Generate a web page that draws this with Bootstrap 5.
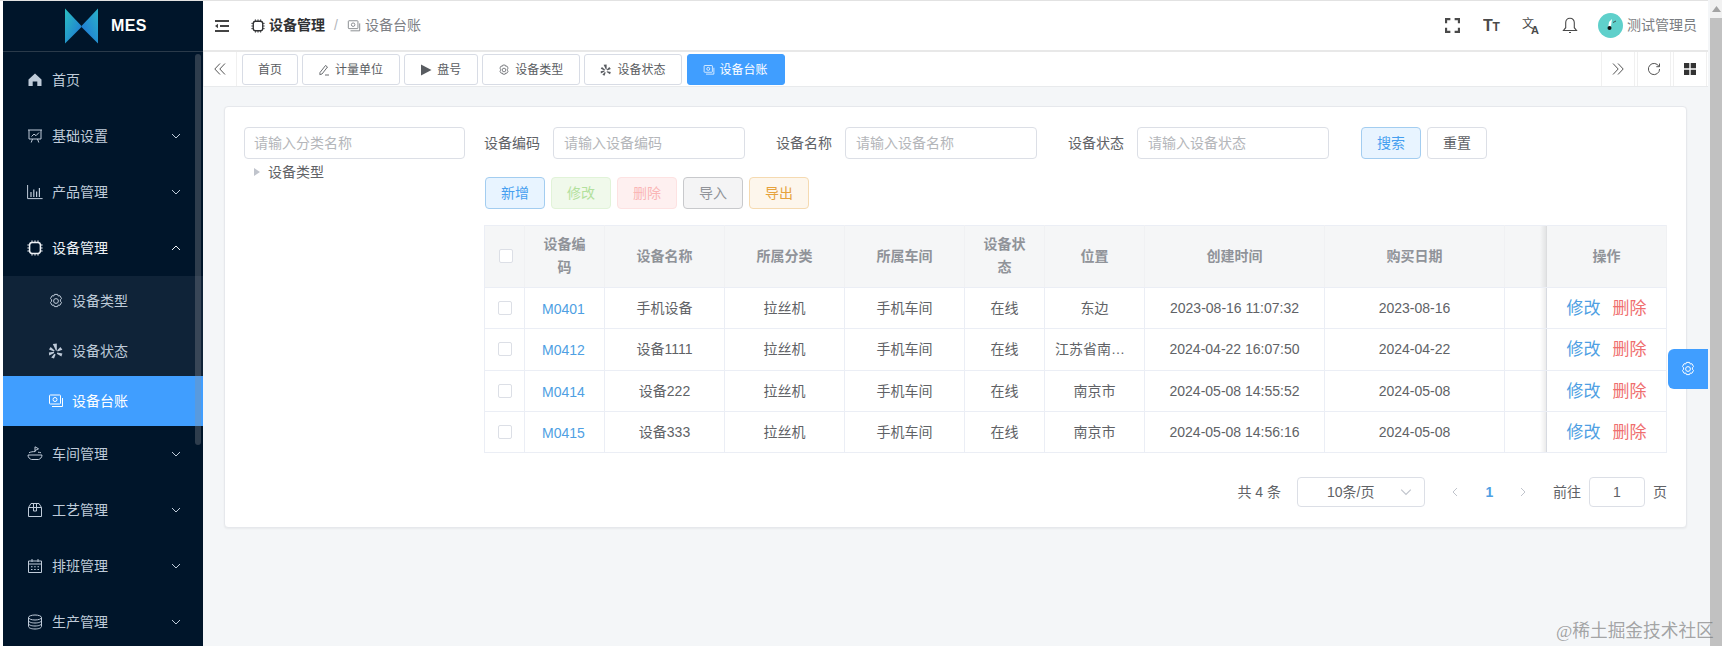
<!DOCTYPE html>
<html lang="zh-CN">
<head>
<meta charset="utf-8">
<title>设备台账</title>
<link href="https://cdn.jsdelivr.net/npm/bootstrap@5.3.0/dist/css/bootstrap.min.css" rel="stylesheet">
<style>
html,body{height:646px;overflow:hidden;margin:0}
body{font-family:"Liberation Sans","Noto Sans CJK SC",sans-serif;font-size:14px;color:#606266;background:#f4f6f8}
.app-shell{height:646px;border-top:1px solid #e2e2e2;padding-left:3px;background:#fff;position:relative}
.side-rail{width:200px;flex:none;background:#00152a;color:#bfcbd9;position:relative;overflow:hidden}
.logo-bar{height:51px;flex:none;border-bottom:1px solid #2a3a4a;padding-left:62px;gap:13px}
.logo-name{color:#fff;font-weight:700;font-size:16px;letter-spacing:.4px}
.side-item{height:56px;flex:none;padding:0 22px 0 24px;gap:9px}
.side-item .side-ico{width:16px;height:16px;flex:none}
.side-item .side-label{flex:1}
.side-chev{width:10px;height:10px;flex:none}
.side-sub{background:#0f2338;flex:none}
.sub-item{height:50px;padding-left:45px;gap:8px}
.sub-item svg{width:16px;height:16px;flex:none}
.sub-item.is-current{background:#409eff;color:#fff}
.item-open{color:#eef2f6}
.side-thumb{position:absolute;left:192px;top:53px;width:6px;height:391px;border-radius:3px;background:rgba(144,147,153,.32)}
.main-col{width:1505px;flex:none;min-width:0}
.top-bar{height:51px;flex:none;border-bottom:2px solid #e8e8e8;background:#fff;padding:0 11px 0 12px}
.burger{width:14px;height:12px;flex:none;color:#444}
.crumbs{margin:0 0 0 22px;font-size:14px;--bs-breadcrumb-divider-color:#b4b7bc;--bs-breadcrumb-item-padding-x:9px;--bs-breadcrumb-margin-bottom:0}
.crumbs .breadcrumb-item{display:flex;align-items:center;gap:4px;color:#7d8085}
.crumbs .breadcrumb-item::before{color:#b4b7bc;margin-right:-4px}
.crumbs .crumb-root{color:#303133;font-weight:700}
.crumbs svg{width:14px;height:14px}
.tool-box{width:39px;display:flex;justify-content:center;color:#4a4a4a}
.avatar-dot{width:25px;height:25px;flex:none;margin:0 4px 0 9px}
.user-name{color:#7a7d82}
.tag-bar{height:35px;flex:none;background:#fff;border-bottom:1px solid #e8eaec}
.tag-nav{width:34px;height:34px;flex:none;color:#555;border-right:1px solid #f0f0f0;border-left:1px solid #f0f0f0}
.tag-nav svg{width:14px;height:14px}
.tag-list{gap:4.1px;margin-left:5px;flex:1;padding-top:2px}
.view-tag{height:31px;padding:0 15px;border:1px solid #d8dce5;border-radius:3px;font-size:12px;color:#595c61;background:#fff;gap:5px}
.view-tag.tag-ico{padding-right:16px}
.view-tag svg{width:12px;height:12px;flex:none}
.view-tag.is-current{background:#409eff;border-color:#409eff;color:#fff}
.tag-tools{gap:2px;margin-right:1px}
.work-area{flex:1;padding:19px 21px 20px;background:#f4f6f8;min-height:0}
.sheet{height:422px;background:#fff;border:1px solid #e6e8ec;border-radius:4px;padding:20px 19px 19px;box-shadow:0 1px 2px rgba(0,0,0,.05);gap:20px}
.tree-col{width:221px;flex:none}
.soft-input.form-control{height:32px;padding:0 10px;font-size:14px;border:1px solid #dcdfe6;border-radius:4px;color:#606266;box-shadow:none}
.soft-input.form-control::placeholder{color:#b4b6ba;opacity:1}
.tree-col .soft-input.form-control{padding-left:9px}
.tree-node{height:26px;padding-left:10px;gap:8px;color:#606266}
.tree-arrow{width:0;height:0;border-left:6px solid #c0c4cc;border-top:4px solid transparent;border-bottom:4px solid transparent}
.data-col{width:1182px;flex:none}
.filter-row{height:32px;margin-bottom:18px}
.filter-label{width:55px;margin:0 14px 0 -1px;flex:none;white-space:nowrap}
.filter-input{width:192px;flex:none;margin-right:32px}
.tone-btn.btn{width:60px;height:32px;padding:0;font-size:14px;border-radius:4px;--bs-btn-disabled-opacity:1;opacity:1}
.tone-blue.btn{background:#e8f4ff;border-color:#a3cdf0;color:#469ff0}
.tone-green.btn{background:#f0f9eb;border-color:#e1f3d8;color:#b3e19d}
.tone-red.btn{background:#fef0f0;border-color:#fde2e2;color:#fab6b6}
.tone-gray.btn{background:#f4f4f5;border-color:#c8c9cc;color:#909399}
.tone-amber.btn{background:#fdf6ec;border-color:#f5dab1;color:#e6a23c}
.tone-plain.btn{background:#fff;border-color:#dcdfe6;color:#606266;margin-left:6px}
.action-row{gap:6px;height:32px;margin-bottom:16px}
.grid-table.table{width:1182px;table-layout:fixed;margin:0 0 0 -1px;font-size:14px;--bs-table-color:#606266;border-top:1px solid #ebeef5;border-color:#ebeef5}
.grid-table th,.grid-table td{padding:0 10px;text-align:center;vertical-align:middle;border:0;border-right:1px solid #ebeef5;border-bottom:1px solid #ebeef5}
.grid-table th{height:62px;background:#f5f6f7;color:#909399;font-weight:700;line-height:23px;padding:0 14px 1px;border-right-color:#f0f1f3}
.grid-table td{height:41.25px;line-height:20px}
.grid-table tr>*:first-child{border-left:1px solid #ebeef5}
.tick-box{display:block;width:14px;height:14px;margin:0 auto;border:1px solid #dcdfe6;border-radius:2px;background:#fff}
.code-link{color:#4f9fe3;text-decoration:none;display:inline-block;padding-top:2px;margin-left:-2px}
.grid-table .fix-col{position:relative}
.grid-table .fix-col::before{content:"";position:absolute;left:-7px;top:0;bottom:0;width:7px;background:linear-gradient(to left,rgba(0,0,0,.09),rgba(0,0,0,0))}
.act-edit,.act-del{font-size:17px;text-decoration:none;display:inline-block;padding-top:2px}
.act-edit{color:#4f9fe3}
.act-del{color:#ef6f6f;margin-left:12px}
.pager-row{margin-top:24px;height:30px}
.pager-total{margin-right:16px}
.pager-size{width:128px;height:30px;border:1px solid #dcdfe6;border-radius:4px;padding:0 12px 0 29px;margin-right:13px}
.pager-size svg{width:12px;height:12px;color:#c0c4cc}
.pager-btn{width:33px;text-align:center;color:#c0c4cc;height:30px}
.pager-btn svg{width:10px;height:10px}
.pager-num{color:#4f9fe3;font-weight:700;width:37px}
.pager-next{width:29px}
.pager-jump{margin-left:16px;gap:8px}
.pager-input{width:56px;height:30px;border:1px solid #dcdfe6;border-radius:4px;color:#606266}
.page-scroll{width:14px;flex:none;padding-left:2px;background:#f4f6f8;margin-top:-1px}
.scroll-up{height:18px;background:#f1f1f1;color:#a3a3a3;font-size:0}
.scroll-up svg{width:9px;height:6px}
.scroll-thumb{flex:1;background:#c1c1c1}
.float-gear{position:absolute;left:1668px;top:348px;width:40px;height:40px;background:#409eff;color:#fff;border-radius:6px 0 0 6px}
.float-gear svg{width:16px;height:16px}
.mark-text{position:absolute;left:1556px;top:618px;font:17.7px/24px "Liberation Serif","Noto Sans CJK SC",serif;color:rgba(110,110,110,.62);white-space:nowrap}
</style>
</head>
<body>
<svg width="0" height="0" class="position-absolute">
  <defs>
    <linearGradient id="wingL" x1="0" y1="0" x2="1" y2="1"><stop offset="0" stop-color="#2bbfc0"/><stop offset="1" stop-color="#1d72d6"/></linearGradient>
    <linearGradient id="wingR" x1="1" y1="0" x2="0" y2="1"><stop offset="0" stop-color="#2bb3c8"/><stop offset="1" stop-color="#1d6fd8"/></linearGradient>
    <symbol id="i-chev" viewBox="0 0 10 10"><path d="M1 3l4 4 4-4" fill="none" stroke="currentColor" stroke-width="1"/></symbol>
    <symbol id="i-chip" viewBox="0 0 16 16"><g fill="none" stroke="currentColor"><rect x="2.6" y="2.6" width="10.8" height="10.8" rx="2.6" stroke-width="1.5"/><path d="M5 .4v2.400M8 .4v2.400M11 .4v2.400M5 13.200v2.400M8 13.200v2.400M11 13.200v2.400M.4 5h2.400M.4 8h2.400M.4 11h2.400M13.200 5h2.400M13.200 8h2.400M13.200 11h2.400" stroke-width="1"/></g></symbol>
    <symbol id="i-gear" viewBox="0 0 16 16"><g fill="none" stroke="currentColor" stroke-width="1"><path d="M6.400 1.400h3.200l.6 1.600 1.700-.3 1.600 2.800-1.100 1.300v1.400l1.100 1.300-1.600 2.800-1.700-.3-.6 1.600H6.400l-.6-1.600-1.700.3-1.600-2.800 1.100-1.300V6.800L2.500 5.500l1.600-2.800 1.700.3z" stroke-linejoin="round"/><circle cx="8" cy="8" r="2.4"/></g></symbol>
    <symbol id="i-yelp" viewBox="0 0 16 16"><g fill="currentColor"><path d="M4.800 1l4-.4v6.800L8 7.800z"/><path d="M1 6.400L2.600 4l4 3.400-.6 1.200z"/><path d="M1.200 12.600L.9 9.600l5-.9.3 1.300z"/><path d="M6 15.600l-2.800-1.200 3.200-3.600 1.200.6z"/><path d="M9.200 7.200l3.200-3.200 2 2.800-4.800 1.800z"/><path d="M9.400 9.600l5 .9-1 3-4.600-2.800z"/></g></symbol>
    <symbol id="i-cash" viewBox="0 0 16 16"><g fill="none" stroke="currentColor" stroke-width="1"><rect x="1.500" y="2" width="11" height="9" rx=".8"/><circle cx="7" cy="6.500" r="2"/><path d="M14.500 5v8.500H4"/></g></symbol>
    <symbol id="i-dleft" viewBox="0 0 14 14"><path d="M7 1.500L1.800 7 7 12.500M12 1.500L6.800 7l5.200 5.500" fill="none" stroke="currentColor" stroke-width="1"/></symbol>
    <symbol id="i-dright" viewBox="0 0 14 14"><path d="M2 1.500L7.200 7 2 12.500M7 1.500L12.200 7 7 12.500" fill="none" stroke="currentColor" stroke-width="1"/></symbol>
  </defs>
</svg>

<div class="app-shell d-flex">
  <aside class="side-rail d-flex flex-column">
    <div class="logo-bar d-flex align-items-center">
      <svg width="33" height="36" viewBox="0 0 34 36"><polygon points="0,0 17,18 17,19 0,36" fill="url(#wingL)"/><polygon points="34,0 17,18 17,19 34,36" fill="url(#wingR)"/></svg>
      <span class="logo-name">MES</span>
    </div>
    <div class="side-item d-flex align-items-center">
      <svg class="side-ico" viewBox="0 0 16 16"><path d="M8 1.500L1.500 7.600V14h4.200V9.600h4.600V14h4.200V7.600z" fill="currentColor"/></svg>
      <span class="side-label">首页</span>
    </div>
    <div class="side-item d-flex align-items-center">
      <svg class="side-ico" viewBox="0 0 16 16"><path d="M1 2h14M2 2v9h12V2M5.500 11l-1.300 3.500M10.500 11l1.300 3.500M4.500 8.500l2.500-2.400 2 1.600 3-3.200" fill="none" stroke="currentColor"/></svg>
      <span class="side-label">基础设置</span>
      <svg class="side-chev"><use href="#i-chev"/></svg>
    </div>
    <div class="side-item d-flex align-items-center">
      <svg class="side-ico" viewBox="0 0 16 16"><path d="M.6 1v13.600h15" fill="none" stroke="currentColor"/><path d="M3.400 8h1.200v5H3.400zM6.200 5.500h1.200V13H6.200zM9 7.500h1.200V13H9zM11.800 4h1.200v9h-1.200z" fill="currentColor"/></svg>
      <span class="side-label">产品管理</span>
      <svg class="side-chev"><use href="#i-chev"/></svg>
    </div>
    <div class="side-item item-open d-flex align-items-center">
      <svg class="side-ico"><use href="#i-chip"/></svg>
      <span class="side-label">设备管理</span>
      <svg class="side-chev" style="transform:rotate(180deg)"><use href="#i-chev"/></svg>
    </div>
    <div class="side-sub">
      <div class="sub-item d-flex align-items-center"><svg><use href="#i-gear"/></svg><span>设备类型</span></div>
      <div class="sub-item d-flex align-items-center"><svg><use href="#i-yelp"/></svg><span>设备状态</span></div>
      <div class="sub-item is-current d-flex align-items-center"><svg><use href="#i-cash"/></svg><span>设备台账</span></div>
    </div>
    <div class="side-item d-flex align-items-center">
      <svg class="side-ico" viewBox="0 0 16 16"><path d="M1 9h14c0 2.500-1.800 4-3.500 4.500h-7C2.800 13 1 11.500 1 9zM2 6.800c1.800-1 3.800-1.200 6-1.200M8 6V.8l3.500 2L8 4.600M11 6.200c1.200.1 2.200.3 3 .6" fill="none" stroke="currentColor"/></svg>
      <span class="side-label">车间管理</span>
      <svg class="side-chev"><use href="#i-chev"/></svg>
    </div>
    <div class="side-item d-flex align-items-center">
      <svg class="side-ico" viewBox="0 0 16 16"><path d="M1.500 5.500L4 1.500h8l2.500 4v9h-13zM1.500 5.500h13M6.500 1.500V9h3V1.500" fill="none" stroke="currentColor"/></svg>
      <span class="side-label">工艺管理</span>
      <svg class="side-chev"><use href="#i-chev"/></svg>
    </div>
    <div class="side-item d-flex align-items-center">
      <svg class="side-ico" viewBox="0 0 16 16"><path d="M1.500 3h13v11.500h-13zM1.500 6h13M5 1v3M11 1v3" fill="none" stroke="currentColor"/><path d="M4 8.200h1.500v1H4zM7.200 8.200h1.500v1H7.200zM10.500 8.200H12v1h-1.500zM4 11h1.500v1H4zM7.200 11h1.500v1H7.200zM10.500 11H12v1h-1.500z" fill="currentColor"/></svg>
      <span class="side-label">排班管理</span>
      <svg class="side-chev"><use href="#i-chev"/></svg>
    </div>
    <div class="side-item d-flex align-items-center">
      <svg class="side-ico" viewBox="0 0 16 16"><g fill="none" stroke="currentColor"><ellipse cx="8" cy="3.500" rx="6.500" ry="2.500"/><path d="M1.500 3.500v9c0 1.400 2.900 2.500 6.500 2.500s6.500-1.100 6.500-2.500v-9M1.500 6.500C1.500 7.900 4.400 9 8 9s6.500-1.100 6.500-2.500M1.500 9.500c0 1.400 2.900 2.500 6.500 2.500s6.500-1.100 6.500-2.500"/></g></svg>
      <span class="side-label">生产管理</span>
      <svg class="side-chev"><use href="#i-chev"/></svg>
    </div>
    <div class="side-thumb"></div>
  </aside>

  <main class="main-col d-flex flex-column">
    <header class="top-bar d-flex align-items-center">
      <svg class="burger" viewBox="0 0 14 12"><path d="M0 0h14v2H0zM0 10h14v2H0zM5 5h9v2H5zM0 6l3-2.200v4.400z" fill="currentColor"/></svg>
      <ol class="breadcrumb crumbs align-items-center">
        <li class="breadcrumb-item crumb-root"><svg><use href="#i-chip"/></svg>设备管理</li>
        <li class="breadcrumb-item active"><svg><use href="#i-cash"/></svg>设备台账</li>
      </ol>
      <div class="d-flex align-items-center ms-auto">
        <span class="tool-box"><svg width="15" height="15" viewBox="0 0 14 14"><path d="M1 5V1h4M9 1h4v4M13 9v4H9M5 13H1V9" fill="none" stroke="currentColor" stroke-width="2"/></svg></span>
        <span class="tool-box"><svg width="18" height="22" viewBox="0 0 18 22"><text x="0" y="16" font-family="Liberation Sans" font-weight="700" font-size="16" fill="currentColor">T</text><text x="9.500" y="16" font-family="Liberation Sans" font-weight="700" font-size="12" fill="currentColor">T</text></svg></span>
        <span class="tool-box"><svg width="18" height="24" viewBox="0 0 18 24"><text x="0" y="14" font-family="Noto Sans CJK SC" font-size="12" fill="currentColor">文</text><text x="9" y="20" font-family="Liberation Sans" font-weight="700" font-size="11" fill="currentColor">A</text></svg></span>
        <span class="tool-box"><svg width="16" height="17" viewBox="0 0 16 17"><path d="M8 1.200c-2.800 0-4.300 2-4.300 4.500v5L1.500 13.500h13l-2.200-2.800v-5c0-2.500-1.500-4.500-4.300-4.500zM7 15.500h2" fill="none" stroke="currentColor" stroke-width="1.100"/></svg></span>
        <svg class="avatar-dot" viewBox="0 0 25 25"><circle cx="12.500" cy="12.500" r="12.500" fill="#5fd0cb"/><path d="M11 9l3-3-1 7-3 3z" fill="#fff"/><circle cx="11.500" cy="15" r="2" fill="#111"/><path d="M15 9.500l3-1.500" stroke="#333" stroke-width=".8"/></svg>
        <span class="user-name">测试管理员</span>
      </div>
    </header>

    <nav class="tag-bar d-flex">
      <span class="tag-nav d-flex align-items-center justify-content-center"><svg><use href="#i-dleft"/></svg></span>
      <div class="tag-list d-flex align-items-start">
        <span class="view-tag d-inline-flex align-items-center">首页</span>
        <span class="view-tag tag-ico d-inline-flex align-items-center"><svg viewBox="0 0 12 12"><path d="M7.500 1.500l2 1.500L4 10l-2.200.6L2 8.500zM7 11h4" fill="none" stroke="currentColor" stroke-width=".9"/></svg>计量单位</span>
        <span class="view-tag tag-ico d-inline-flex align-items-center"><svg viewBox="0 0 12 12"><path d="M1 .5L11.500 6 1 11.500z" fill="currentColor"/></svg>盘号</span>
        <span class="view-tag tag-ico d-inline-flex align-items-center"><svg><use href="#i-gear"/></svg>设备类型</span>
        <span class="view-tag tag-ico d-inline-flex align-items-center"><svg><use href="#i-yelp"/></svg>设备状态</span>
        <span class="view-tag tag-ico is-current d-inline-flex align-items-center"><svg><use href="#i-cash"/></svg>设备台账</span>
      </div>
      <div class="tag-tools d-flex">
        <span class="tag-nav d-flex align-items-center justify-content-center"><svg><use href="#i-dright"/></svg></span>
        <span class="tag-nav d-flex align-items-center justify-content-center"><svg viewBox="0 0 14 14"><path d="M12 4.500A5.600 5.600 0 1 0 12.600 7M12.500 1.500v3.200H9.300" fill="none" stroke="currentColor"/></svg></span>
        <span class="tag-nav d-flex align-items-center justify-content-center"><svg viewBox="0 0 14 14"><path d="M1 1h5.300v5.300H1zM7.700 1H13v5.300H7.700zM1 7.700h5.300V13H1zM7.700 7.700H13V13H7.700z" fill="#333"/></svg></span>
      </div>
    </nav>

    <div class="work-area">
      <section class="sheet d-flex">
        <div class="tree-col">
          <input class="form-control soft-input" placeholder="请输入分类名称">
          <div class="tree-node d-flex align-items-center"><span class="tree-arrow"></span><span>设备类型</span></div>
        </div>
        <div class="data-col">
          <div class="filter-row d-flex align-items-center">
            <label class="filter-label">设备编码</label>
            <input class="form-control soft-input filter-input" placeholder="请输入设备编码">
            <label class="filter-label">设备名称</label>
            <input class="form-control soft-input filter-input" placeholder="请输入设备名称">
            <label class="filter-label">设备状态</label>
            <input class="form-control soft-input filter-input" placeholder="请输入设备状态">
            <button class="btn tone-btn tone-blue">搜索</button>
            <button class="btn tone-btn tone-plain">重置</button>
          </div>
          <div class="action-row d-flex">
            <button class="btn tone-btn tone-blue">新增</button>
            <button class="btn tone-btn tone-green">修改</button>
            <button class="btn tone-btn tone-red">删除</button>
            <button class="btn tone-btn tone-gray">导入</button>
            <button class="btn tone-btn tone-amber">导出</button>
          </div>
          <table class="table grid-table">
            <colgroup>
              <col style="width:40px"><col style="width:80px"><col style="width:120px"><col style="width:120px"><col style="width:120px"><col style="width:80px"><col style="width:100px"><col style="width:180px"><col style="width:180px"><col style="width:42px"><col style="width:120px">
            </colgroup>
            <thead>
              <tr>
                <th><span class="tick-box"></span></th><th>设备编码</th><th>设备名称</th><th>所属分类</th><th>所属车间</th><th>设备状态</th><th>位置</th><th>创建时间</th><th>购买日期</th><th></th><th class="fix-col">操作</th>
              </tr>
            </thead>
            <tbody>
              <tr><td><span class="tick-box"></span></td><td><a class="code-link" href="#">M0401</a></td><td>手机设备</td><td>拉丝机</td><td>手机车间</td><td>在线</td><td class="text-truncate">东边</td><td>2023-08-16 11:07:32</td><td>2023-08-16</td><td></td><td class="fix-col"><a class="act-edit" href="#">修改</a><a class="act-del" href="#">删除</a></td></tr>
              <tr><td><span class="tick-box"></span></td><td><a class="code-link" href="#">M0412</a></td><td>设备1111</td><td>拉丝机</td><td>手机车间</td><td>在线</td><td class="text-truncate">江苏省南京市</td><td>2024-04-22 16:07:50</td><td>2024-04-22</td><td></td><td class="fix-col"><a class="act-edit" href="#">修改</a><a class="act-del" href="#">删除</a></td></tr>
              <tr><td><span class="tick-box"></span></td><td><a class="code-link" href="#">M0414</a></td><td>设备222</td><td>拉丝机</td><td>手机车间</td><td>在线</td><td class="text-truncate">南京市</td><td>2024-05-08 14:55:52</td><td>2024-05-08</td><td></td><td class="fix-col"><a class="act-edit" href="#">修改</a><a class="act-del" href="#">删除</a></td></tr>
              <tr><td><span class="tick-box"></span></td><td><a class="code-link" href="#">M0415</a></td><td>设备333</td><td>拉丝机</td><td>手机车间</td><td>在线</td><td class="text-truncate">南京市</td><td>2024-05-08 14:56:16</td><td>2024-05-08</td><td></td><td class="fix-col"><a class="act-edit" href="#">修改</a><a class="act-del" href="#">删除</a></td></tr>
            </tbody>
          </table>
          <div class="pager-row d-flex align-items-center justify-content-end">
            <span class="pager-total">共 4 条</span>
            <div class="pager-size d-flex align-items-center justify-content-between"><span>10条/页</span><svg><use href="#i-chev"/></svg></div>
            <span class="pager-btn d-flex align-items-center justify-content-center"><svg style="transform:rotate(90deg)"><use href="#i-chev"/></svg></span>
            <span class="pager-btn pager-num d-flex align-items-center justify-content-center">1</span>
            <span class="pager-btn pager-next d-flex align-items-center justify-content-center"><svg style="transform:rotate(-90deg)"><use href="#i-chev"/></svg></span>
            <div class="pager-jump d-flex align-items-center"><span>前往</span><span class="pager-input d-flex align-items-center justify-content-center">1</span><span>页</span></div>
          </div>
        </div>
      </section>
    </div>
  </main>

  <div class="page-scroll d-flex flex-column">
    <div class="scroll-up d-flex align-items-center justify-content-center"><svg viewBox="0 0 9 6"><path d="M4.500 0L9 6H0z" fill="currentColor"/></svg></div>
    <div class="scroll-thumb"></div>
  </div>

  <div class="float-gear d-flex align-items-center justify-content-center"><svg><use href="#i-gear"/></svg></div>
  <div class="mark-text">@稀土掘金技术社区</div>
</div>
<script src="https://cdn.jsdelivr.net/npm/bootstrap@5.3.0/dist/js/bootstrap.bundle.min.js"></script>
</body>
</html>
